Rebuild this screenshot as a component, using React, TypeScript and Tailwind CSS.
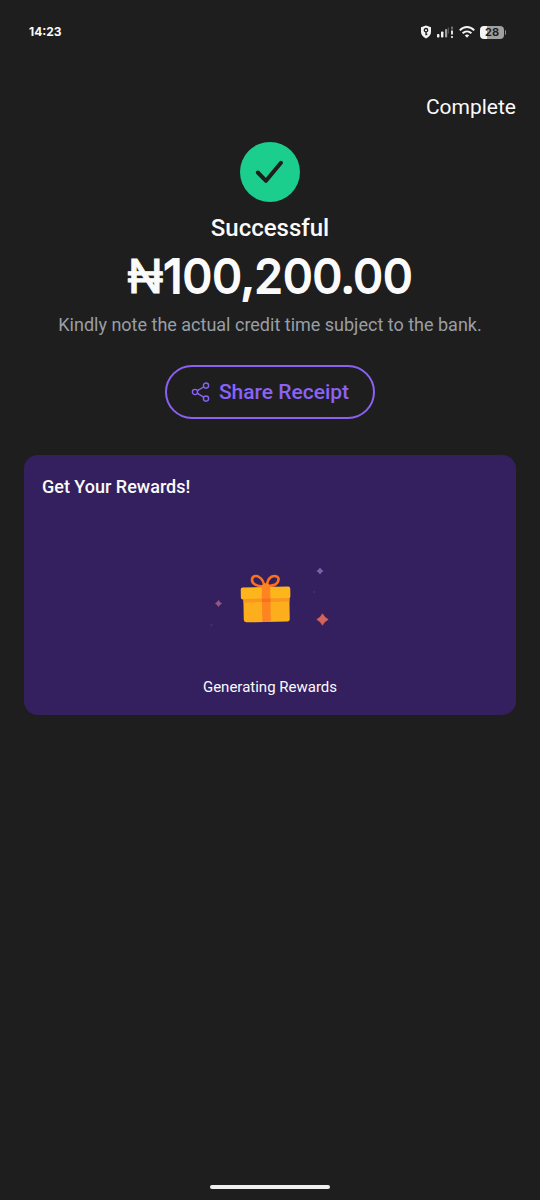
function StatusIcons() {
  return (
    <div className="flex items-center gap-[5px]" aria-hidden="true">
      <svg width="12" height="14" viewBox="0 0 12 14">
        <path d="M6 0.5 L11 2.2 V7 C11 10 8.8 12.2 6 13.4 C3.2 12.2 1 10 1 7 V2.2 Z" fill="#f4f4f4" />
        <circle cx="6" cy="5.2" r="1.7" fill="none" stroke="#1e1e1e" strokeWidth="1.3" />
        <path d="M6 7 V10.2 M6 9.4 H7.4" fill="none" stroke="#1e1e1e" strokeWidth="1.3" />
      </svg>
      <svg width="17" height="14" viewBox="0 0 17 14">
        <rect x="0" y="9" width="2.4" height="3.5" rx="0.8" fill="#f4f4f4" />
        <rect x="4" y="6.5" width="2.4" height="6" rx="0.8" fill="#f4f4f4" />
        <rect x="8" y="4" width="2.2" height="8.5" rx="0.8" fill="#a0a0a0" />
        <rect x="10.8" y="2.5" width="1" height="6" fill="#606060" />
        <rect x="14" y="1.5" width="2" height="3" rx="0.6" fill="#707070" />
        <path d="M15 5.5 V9.5" stroke="#f4f4f4" strokeWidth="1.8" />
        <circle cx="15" cy="12" r="1.1" fill="#f4f4f4" />
      </svg>
      <svg width="16" height="14" viewBox="0 0 16 14" fill="none" stroke="#f4f4f4" strokeWidth="2">
        <path d="M0.8 5.4 C5 1 11 1 15.2 5.4" />
        <path d="M3.6 8.3 C6.2 5.8 9.8 5.8 12.4 8.3" />
        <path d="M5.8 10.3 Q8 8.6 10.2 10.3 L8 12.8 Z" fill="#f4f4f4" stroke="none" />
      </svg>
      <div className="flex items-center gap-px">
        <span className="flex h-[13px] w-6 items-center justify-center rounded bg-linear-to-r from-[#f4f4f4] from-30% to-[#a0a0a0] to-30% font-['Inter',sans-serif] text-[11px] leading-none font-bold text-[#1e1e1e]">
          28
        </span>
        <span className="h-[5px] w-px rounded-r bg-[#8c8c8c]" />
      </div>
    </div>
  );
}

function ShareIcon() {
  return (
    <svg width="20" height="20" viewBox="0 0 20 20" fill="none" stroke="currentColor" strokeWidth="1.4" aria-hidden="true">
      <circle cx="4" cy="10" r="2.6" />
      <circle cx="15" cy="3.6" r="2.6" />
      <circle cx="15" cy="16.6" r="2.6" />
      <path d="M6.5 8.7 L12.6 5 M6.5 11.4 L12.6 15.2" />
    </svg>
  );
}

function GiftArt() {
  return (
    <svg className="mx-auto block" width="140" height="80" viewBox="0 0 140 80" aria-hidden="true">
      <g fill="none" stroke="#fb701b" strokeWidth="2.6">
        <path d="M64 26 C58 27 52 24 52 20 C52 16 56 15 59 17 C62 19 64 22 64 26 Z" />
        <path d="M67 26 C67 22 69 18 72 16.5 C76 15 79 17 78.5 20 C78 24 73 26 67 26 Z" />
      </g>
      <g transform="rotate(-1 65 44)">
        <rect x="43.5" y="36" width="46" height="26" rx="2.5" fill="#fcae1c" />
        <rect x="41" y="27" width="49.5" height="12" rx="2" fill="#fdb51c" />
        <rect x="43.5" y="38.5" width="46" height="3.5" fill="#fb9420" />
        <path d="M62 26 L64 23.2 H68 L70.5 26 V62 H62 Z" fill="#fd8420" />
        <rect x="62" y="38.5" width="8.5" height="3.5" fill="#fb701b" />
      </g>
      <path d="M120 7.5 L121.5 9.5 L123.5 11 L121.5 12.5 L120 14.5 L118.5 12.5 L116.5 11 L118.5 9.5 Z" fill="#7466ae" />
      <path d="M122.5 53.8 Q124.3 57.6 128.2 59.5 Q124.3 61.4 122.5 65.2 Q120.7 61.4 116.8 59.5 Q120.7 57.6 122.5 53.8 Z" fill="#d5645c" stroke="#d5645c" strokeWidth="0.6" />
      <path d="M18.5 40 L20 42 L22 43.5 L20 45 L18.5 47 L17 45 L15 43.5 L17 42 Z" fill="#8f5888" />
      <circle cx="114" cy="32" r="1.3" fill="#48286a" />
      <circle cx="11.5" cy="65" r="1.3" fill="#48286a" />
    </svg>
  );
}

export default function App() {
  return (
    <div className="flex min-h-screen flex-col bg-[#1e1e1e] font-['Roboto',sans-serif] text-[#fafafa]">
      <div className="flex h-16 items-center justify-between pr-[34px] pl-[29px]">
        <span className="font-['Inter',sans-serif] text-[12px] leading-none font-bold">14:23</span>
        <StatusIcons />
      </div>

      <header className="flex h-[78px] items-center justify-end px-6 pt-2">
        <button type="button" className="text-[21px] leading-7">Complete</button>
      </header>

      <main className="flex flex-1 flex-col items-center px-6">
        <svg width="60" height="60" viewBox="0 0 60 60" role="img" aria-label="Success">
          <circle cx="30" cy="30" r="30" fill="#1bce8e" />
          <path d="M17.8 30.5 L26 38.8 L41 20.8" fill="none" stroke="#1e1e1e" strokeWidth="4" strokeLinecap="round" strokeLinejoin="round" />
        </svg>
        <h1 className="mt-3 text-2xl leading-7 font-medium">Successful</h1>
        <p className="mt-1 font-['Inter','Roboto',sans-serif] text-[47px] leading-[60px] [-webkit-text-stroke:2px_#fafafa] [stroke-linejoin:round]">
          <span className="[-webkit-text-stroke:1px_#fafafa]">₦</span>100,200.00
        </p>
        <p className="mt-[7px] text-lg leading-6 whitespace-nowrap text-[#999ea5]">
          Kindly note the actual credit time subject to the bank.
        </p>
        <button
          type="button"
          className="mt-7 flex h-[54px] items-center gap-2 rounded-full border-2 border-[#8b62f0] px-[24px] text-[21px] leading-7 font-medium text-[#8b62f8]"
        >
          <ShareIcon />
          Share Receipt
        </button>

        <section className="mt-9 flex w-full flex-col rounded-[14px] bg-[#35205f] px-[18px] pt-[18px] pb-4">
          <h2 className="text-lg leading-7 font-medium">Get Your Rewards!</h2>
          <div className="mt-[59px]">
            <GiftArt />
          </div>
          <p className="mt-[35px] text-center text-[15px] leading-6">Generating Rewards</p>
        </section>
      </main>

      <div className="flex justify-center pb-[11px]">
        <div className="h-1 w-[120px] rounded-full bg-[#f2eff3]" />
      </div>
    </div>
  );
}
